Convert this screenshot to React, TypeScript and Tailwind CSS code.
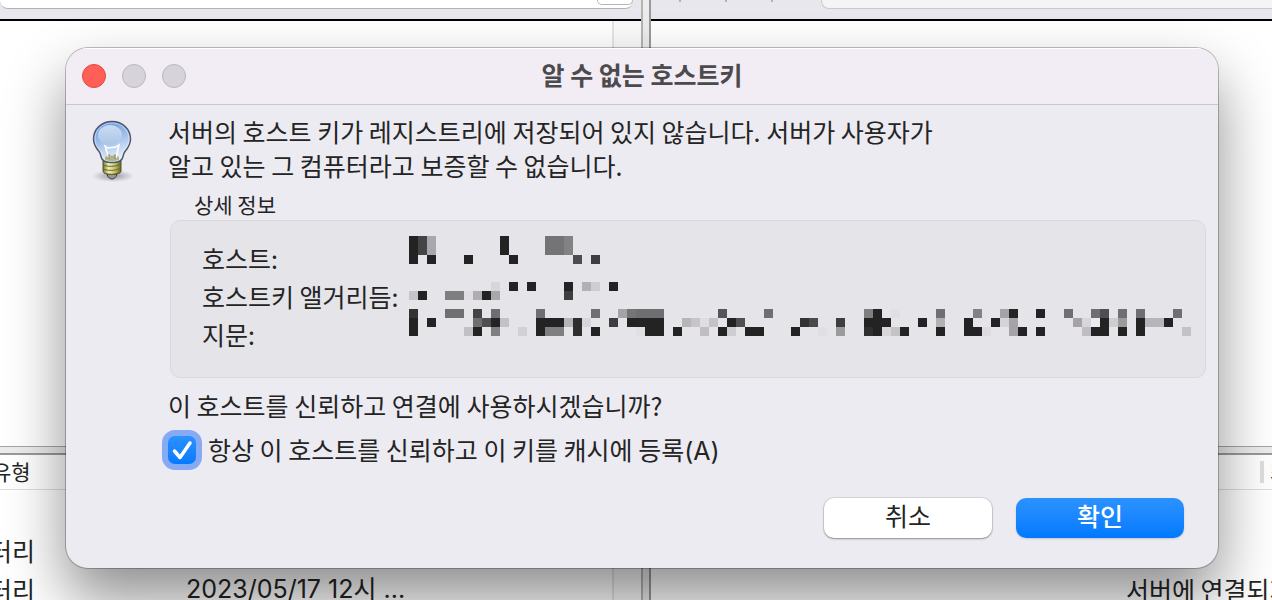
import { useState } from "react";

type Block = [x: number, width: number, shade: string];

interface MosaicRow { y: number; height: number; blocks: Block[] }

const INK = "#232323";

// censored host, algorithm and fingerprint values
const MOSAIC: MosaicRow[] = [
    { y: 0, height: 19, blocks: [[0, 9, INK], [9, 9, "#444445"], [18, 9, "#a9a7ab"], [91, 9, INK], [136, 19, "#747476"], [155, 9, "#828184"]] },
    { y: 19, height: 9, blocks: [[0, 9, INK], [18, 9, INK], [55, 9, INK], [100, 9, INK], [164, 9, "#4d4d4f"], [182, 9, "#3e3e40"]] },
    { y: 46, height: 9, blocks: [[82, 9, "#d8d6da"], [100, 9, INK], [118, 9, INK], [155, 9, INK], [173, 9, "#b2b0b4"], [182, 9, "#cfcdd1"], [200, 9, INK]] },
    { y: 55, height: 9, blocks: [[0, 9, "#c6c4c9"], [9, 9, INK], [36, 19, "#7f7e81"], [55, 9, "#dfdde1"], [64, 9, "#afadb1"], [73, 9, INK], [82, 9, "#a9a7ab"], [155, 9, "#3e3e40"]] },
    {
        y: 73, height: 9, blocks: [
            [0, 9, "#333333"], [36, 19, "#6f6e71"], [64, 9, "#444445"], [82, 9, "#6f6e71"], [127, 9, "#6f6e71"], [182, 9, "#6f6e71"],
            [209, 9, "#a5a3a7"], [218, 9, "#757477"], [227, 28, "#6f6e71"], [309, 9, "#565557"], [355, 9, "#6f6e71"], [455, 9, "#7f7e81"],
            [464, 9, INK], [482, 9, "#e1dfe3"], [527, 9, "#6f6e71"], [564, 9, "#828184"], [591, 9, "#a5a3a7"], [600, 9, INK],
            [627, 9, INK], [655, 9, "#6f6e71"], [682, 9, "#6f6e71"], [691, 9, "#4f4e50"], [709, 9, "#6f6e71"], [727, 9, "#6f6e71"],
            [764, 9, "#6f6e71"],
        ],
    },
    {
        y: 82, height: 9, blocks: [
            [0, 9, INK], [18, 9, INK], [64, 9, "#6f6e71"], [73, 9, "#4f4e50"], [82, 9, INK], [91, 9, "#c4c2c7"], [127, 28, INK],
            [155, 9, "#b7b5ba"], [164, 9, "#2f2f30"], [173, 9, "#d8d6da"], [200, 9, "#3e3e40"], [218, 37, INK], [273, 9, "#b7b5ba"],
            [282, 9, "#c6c4c9"], [291, 9, "#dfdde1"], [300, 9, "#c4c2c7"], [318, 9, INK], [327, 9, "#4f4e50"], [391, 9, "#333333"],
            [400, 9, "#4a4a4b"], [427, 9, "#3e3e40"], [455, 27, INK], [509, 9, INK], [527, 9, "#b2b0b4"], [555, 9, INK],
            [582, 9, INK], [591, 9, "#d6d4d8"], [600, 9, "#a5a3a7"], [664, 9, "#a5a3a7"], [673, 9, "#d8d6da"], [682, 9, "#eceaee"],
            [691, 9, INK], [700, 9, "#cfcdd1"], [709, 9, "#9b9a9d"], [727, 9, INK], [736, 19, "#b7b5ba"], [755, 9, INK],
        ],
    },
    {
        y: 91, height: 9, blocks: [
            [0, 9, INK], [55, 9, "#c2c0c5"], [64, 9, INK], [82, 9, "#7f7e81"], [109, 9, "#d3d1d6"], [127, 9, INK], [136, 19, "#7f7e81"],
            [164, 9, "#2f2f30"], [182, 9, INK], [227, 9, "#e1dfe3"], [236, 19, INK], [264, 9, INK], [291, 9, "#bfbdc1"],
            [309, 9, INK], [318, 9, "#cfcdd1"], [336, 19, INK], [382, 9, INK], [409, 9, "#e1dfe3"], [427, 9, "#9b9a9d"],
            [455, 9, "#2f2f30"], [464, 9, INK], [473, 9, "#d8d6da"], [482, 9, "#c4c2c7"], [491, 9, INK], [527, 9, INK],
            [555, 18, INK], [573, 9, "#dedae0"], [600, 9, "#a5a3a7"], [609, 9, INK], [627, 9, INK], [673, 9, "#bfbdc1"],
            [682, 18, INK], [709, 9, INK], [727, 9, INK], [773, 9, "#c4c2c7"],
        ],
    },
];

function Mosaic() {
    return (
        <svg width="782" height="100" viewBox="0 0 782 100" shapeRendering="crispEdges" className="shrink-0" aria-hidden="true">
            {MOSAIC.map(row => row.blocks.map(([x, width, shade]) => (
                <rect key={`${row.y}-${x}`} x={x} y={row.y} width={width} height={row.height} fill={shade} />
            )))}
        </svg>
    );
}

function BulbIcon() {
    return (
        <svg width="44" height="64" viewBox="0 0 44 64" className="shrink-0" aria-hidden="true">
            <defs>
                <linearGradient id="glass" x1="0" y1="0" x2="0.3" y2="1">
                    <stop offset="0" stopColor="#5f92e2" />
                    <stop offset="0.5" stopColor="#9cbde8" />
                    <stop offset="1" stopColor="#e6eef8" />
                </linearGradient>
                <linearGradient id="shine" x1="0" y1="0" x2="0" y2="1">
                    <stop offset="0" stopColor="#cbdcf0" />
                    <stop offset="1" stopColor="#a9c6e8" />
                </linearGradient>
                <linearGradient id="brass" x1="0" y1="0" x2="1" y2="0">
                    <stop offset="0" stopColor="#76742e" />
                    <stop offset="0.3" stopColor="#eeeeb4" />
                    <stop offset="0.65" stopColor="#c5c56d" />
                    <stop offset="1" stopColor="#65632a" />
                </linearGradient>
                <radialGradient id="ground">
                    <stop offset="0" stopColor="#77757a" stopOpacity="0.7" />
                    <stop offset="1" stopColor="#77757a" stopOpacity="0" />
                </radialGradient>
            </defs>
            <ellipse cx="23" cy="56" rx="21" ry="6" fill="url(#ground)" />
            <path d="M17 54.500h10c-1 3-3 4.500-5 4.500s-4-1.500-5-4.500z" fill="#98989b" stroke="#39393c" />
            <path d="M13 40h18v11c0 2-3 3.500-9 3.500S13 53 13 51z" fill="url(#brass)" stroke="#55531f" />
            <path d="M13 45c5 2 12 2 18-1M13 49c5 2 12 2 18-1M14 53c5 2 11 2 16-1" fill="none" stroke="#68662b" />
            <path d="M22 1.500C11.500 1.500 3.500 9 3.500 19c0 6 3 9.500 5.500 12.500 2 2.500 1.500 5 3 7.500 2 3 6 3.500 10 3.500s8-.5 10-3.500c1.500-2.500 1-5 3-7.500 2.500-3 5.500-6.500 5.500-12.500C40.500 9 32.500 1.500 22 1.500z" fill="url(#glass)" stroke="#50556b" strokeWidth="1.500" />
            <path d="M22 3C12.500 3 5 10 5 19c0 5.500 2.500 8.500 5 11.500 2 2.500 2 5.500 3.500 7.500 1.500 2.500 5 3 8.500 3s7-.5 8.500-3c1.500-2 1.500-5 3.500-7.500 2.500-3 5-6 5-11.500C39 10 31.500 3 22 3z" fill="none" stroke="#edf5ff" strokeOpacity="0.5" />
            <ellipse cx="20" cy="15" rx="12" ry="10" fill="url(#shine)" />
            <path d="M15 37c3-2 11-2 14 0v3c-4 1.500-10 1.500-14 0z" fill="#a3a66c" fillOpacity="0.8" />
            <path d="M19 38l-4-12 3 2 8-1 3-2-3 13" fill="none" stroke="#fff" strokeWidth="1.500" />
            <path d="M19 39v-5M25 39v-5" fill="none" stroke="#7d806c" />
        </svg>
    );
}

function FilePane({ side }: { side: "left" | "right" }) {
    const left = side === "left";
    return (
        <section className="flex min-w-0 flex-col overflow-hidden">
            <div className="flex h-[21px] shrink-0 items-start border-b-2 border-black bg-[#e8e7ee]">
                {left ? (
                    <div className="mr-2 flex h-[9px] flex-1 justify-end rounded-b-lg border-b border-[#b1b0b4] bg-white">
                        <div className="h-[5px] w-9 rounded-b-lg border border-t-0 border-[#b5b5b7] bg-white" />
                    </div>
                ) : (
                    <>
                        <div className="flex h-0.5 w-[170px] justify-between pr-12 pl-7">
                            <span className="w-0.5 bg-[#b2b1b7]" />
                            <span className="w-0.5 bg-[#b2b1b7]" />
                            <span className="w-0.5 bg-[#b2b1b7]" />
                        </div>
                        <div className="h-[9px] flex-1 rounded-bl-lg border-b border-l border-[#c9c8cd] bg-[#f4f3f6]" />
                    </>
                )}
            </div>
            <div className="flex h-[425px] shrink-0 justify-end bg-white">
                {left && <div className="w-[29px] border-l-2 border-[#e4e4e4] bg-[#fafafa]" />}
            </div>
            <div className="h-[9px] shrink-0 border-t border-b-2 border-t-[#a5a5a5] border-b-[#999] bg-[#ececec]" />
            {left ? (
                <div className="relative flex-1 bg-white text-[25px] leading-[39px]">
                    <div className="h-[35px] border-b border-[#dedede] text-[21px] leading-8">
                        <span className="-ml-2">유형</span>
                    </div>
                    <div className="mt-[41px] flex flex-col">
                        <div className="-ml-[11px]">터리</div>
                        <div className="-ml-[11px] flex">
                            <span className="w-[197px]">터리</span>
                            <span className="font-[Inter,'Noto_Sans_CJK_KR',sans-serif]">2023/05/17 12시 ...</span>
                        </div>
                    </div>
                    <div className="absolute inset-y-0 right-0 w-[29px] border-l-2 border-[#e4e4e4] bg-[#fafafa]" />
                </div>
            ) : (
                <div className="flex flex-1 flex-col bg-white">
                    <div className="flex h-[35px] items-center justify-end border-b border-[#dedede] text-[21px]">
                        <span className="mr-1.5 h-[22px] w-1 bg-[#dedede]" />
                        <span className="w-0.5 overflow-hidden whitespace-nowrap">최</span>
                    </div>
                    <div className="mt-20 flex justify-end text-[25px] leading-[39px]">
                        <span className="w-[146px] whitespace-nowrap">서버에 연결되지 않음</span>
                    </div>
                </div>
            )}
        </section>
    );
}

export default function App() {
    const [trusted, setTrusted] = useState(true);

    return (
        <div className="relative h-screen overflow-hidden bg-white font-['Noto_Sans_CJK_KR',sans-serif] text-[#242424]">
            <main className="grid h-full grid-cols-[641fr_10px_621fr]">
                <FilePane side="left" />
                <div className="border-l-2 border-r-2 border-l-[#b4b4b4] border-r-[#999] bg-[#ececec]" />
                <FilePane side="right" />
            </main>

            <div className="absolute inset-0 pt-12 pr-[54px] pl-[66px]">
                <div
                    role="dialog"
                    aria-labelledby="dialog-title"
                    className="overflow-hidden rounded-[22px] bg-[#ecebf1] shadow-[0_0_0_1px_rgba(0,0,0,0.25),0_30px_60px_rgba(0,0,0,0.45)]"
                >
                    <header className="grid h-[57px] grid-cols-[1fr_auto_1fr] items-center border-b border-[#c9c8cc] border-t border-t-white bg-[#f2edf4] px-4 pb-0.5">
                        <div className="flex gap-4">
                            <button type="button" aria-label="닫기" className="size-6 rounded-full border border-[#e2463f] bg-[#ff5f57]" />
                            <button type="button" aria-label="최소화" disabled className="size-6 rounded-full border border-[#b9b6bc] bg-[#d6d3da]" />
                            <button type="button" aria-label="확대" disabled className="size-6 rounded-full border border-[#b9b6bc] bg-[#d6d3da]" />
                        </div>
                        <h1 id="dialog-title" className="pb-1 text-[25px] leading-8 font-bold text-[#4c4a4d]">알 수 없는 호스트키</h1>
                    </header>

                    <div className="flex gap-3 pt-[9px] pr-3 pb-[30px] pl-6">
                        <div className="w-[66px] shrink-0 pt-1.5">
                            <BulbIcon />
                        </div>
                        <div className="min-w-0 flex-1 text-[25px] leading-[34px]">
                            <p>
                                서버의 호스트 키가 레지스트리에 저장되어 있지 않습니다. 서버가 사용자가
                                <br />
                                알고 있는 그 컴퓨터라고 보증할 수 없습니다.
                            </p>
                            <h2 className="mt-2 pb-0.5 pl-[26px] text-[21px] leading-[28px]">상세 정보</h2>
                            <div className="ml-0.5 flex h-[158px] rounded-[10px] border border-[#dad9de] bg-[#e5e4e9] pt-[15px]">
                                <div className="w-[238px] shrink-0 pt-[3px] pl-[31px] leading-[38px] whitespace-nowrap">
                                    <div>호스트:</div>
                                    <div>호스트키 앨거리듬:</div>
                                    <div>지문:</div>
                                </div>
                                <Mosaic />
                            </div>
                            <p className="mt-2.5">이 호스트를 신뢰하고 연결에 사용하시겠습니까?</p>
                            <label className="mt-2.5 flex items-center gap-3">
                                <span className="relative flex size-7">
                                    <input
                                        type="checkbox"
                                        checked={trusted}
                                        onChange={e => setTrusted(e.target.checked)}
                                        className="size-7 appearance-none rounded-[7px] bg-white ring-6 ring-[#86aaf3] checked:bg-linear-to-b checked:from-[#2b91ff] checked:to-[#057aff]"
                                    />
                                    {trusted && (
                                        <svg viewBox="0 0 28 28" className="pointer-events-none absolute inset-0 size-7" aria-hidden="true">
                                            <path d="M6.500 15l5.500 6.500L22 7" fill="none" stroke="#fff" strokeWidth="3.500" strokeLinecap="round" strokeLinejoin="round" />
                                        </svg>
                                    )}
                                </span>
                                <span>항상 이 호스트를 신뢰하고 이 키를 캐시에 등록<span className="font-[Inter,sans-serif]">(A)</span></span>
                            </label>
                            <div className="mt-[30px] mr-[22px] flex justify-end gap-6">
                                <button type="button" className="h-10 w-[168px] rounded-[10px] bg-white pb-1.5 leading-[34px] shadow-[0_0_0_1px_rgba(0,0,0,0.08),0_1px_2px_rgba(0,0,0,0.35)]">취소</button>
                                <button type="button" className="h-10 w-[168px] rounded-[10px] bg-linear-to-b from-[#2b92ff] to-[#0079ff] pb-1.5 leading-[34px] font-medium text-white shadow-[0_1px_2px_rgba(0,0,0,0.15)]">확인</button>
                            </div>
                        </div>
                    </div>
                </div>
            </div>
        </div>
    );
}
